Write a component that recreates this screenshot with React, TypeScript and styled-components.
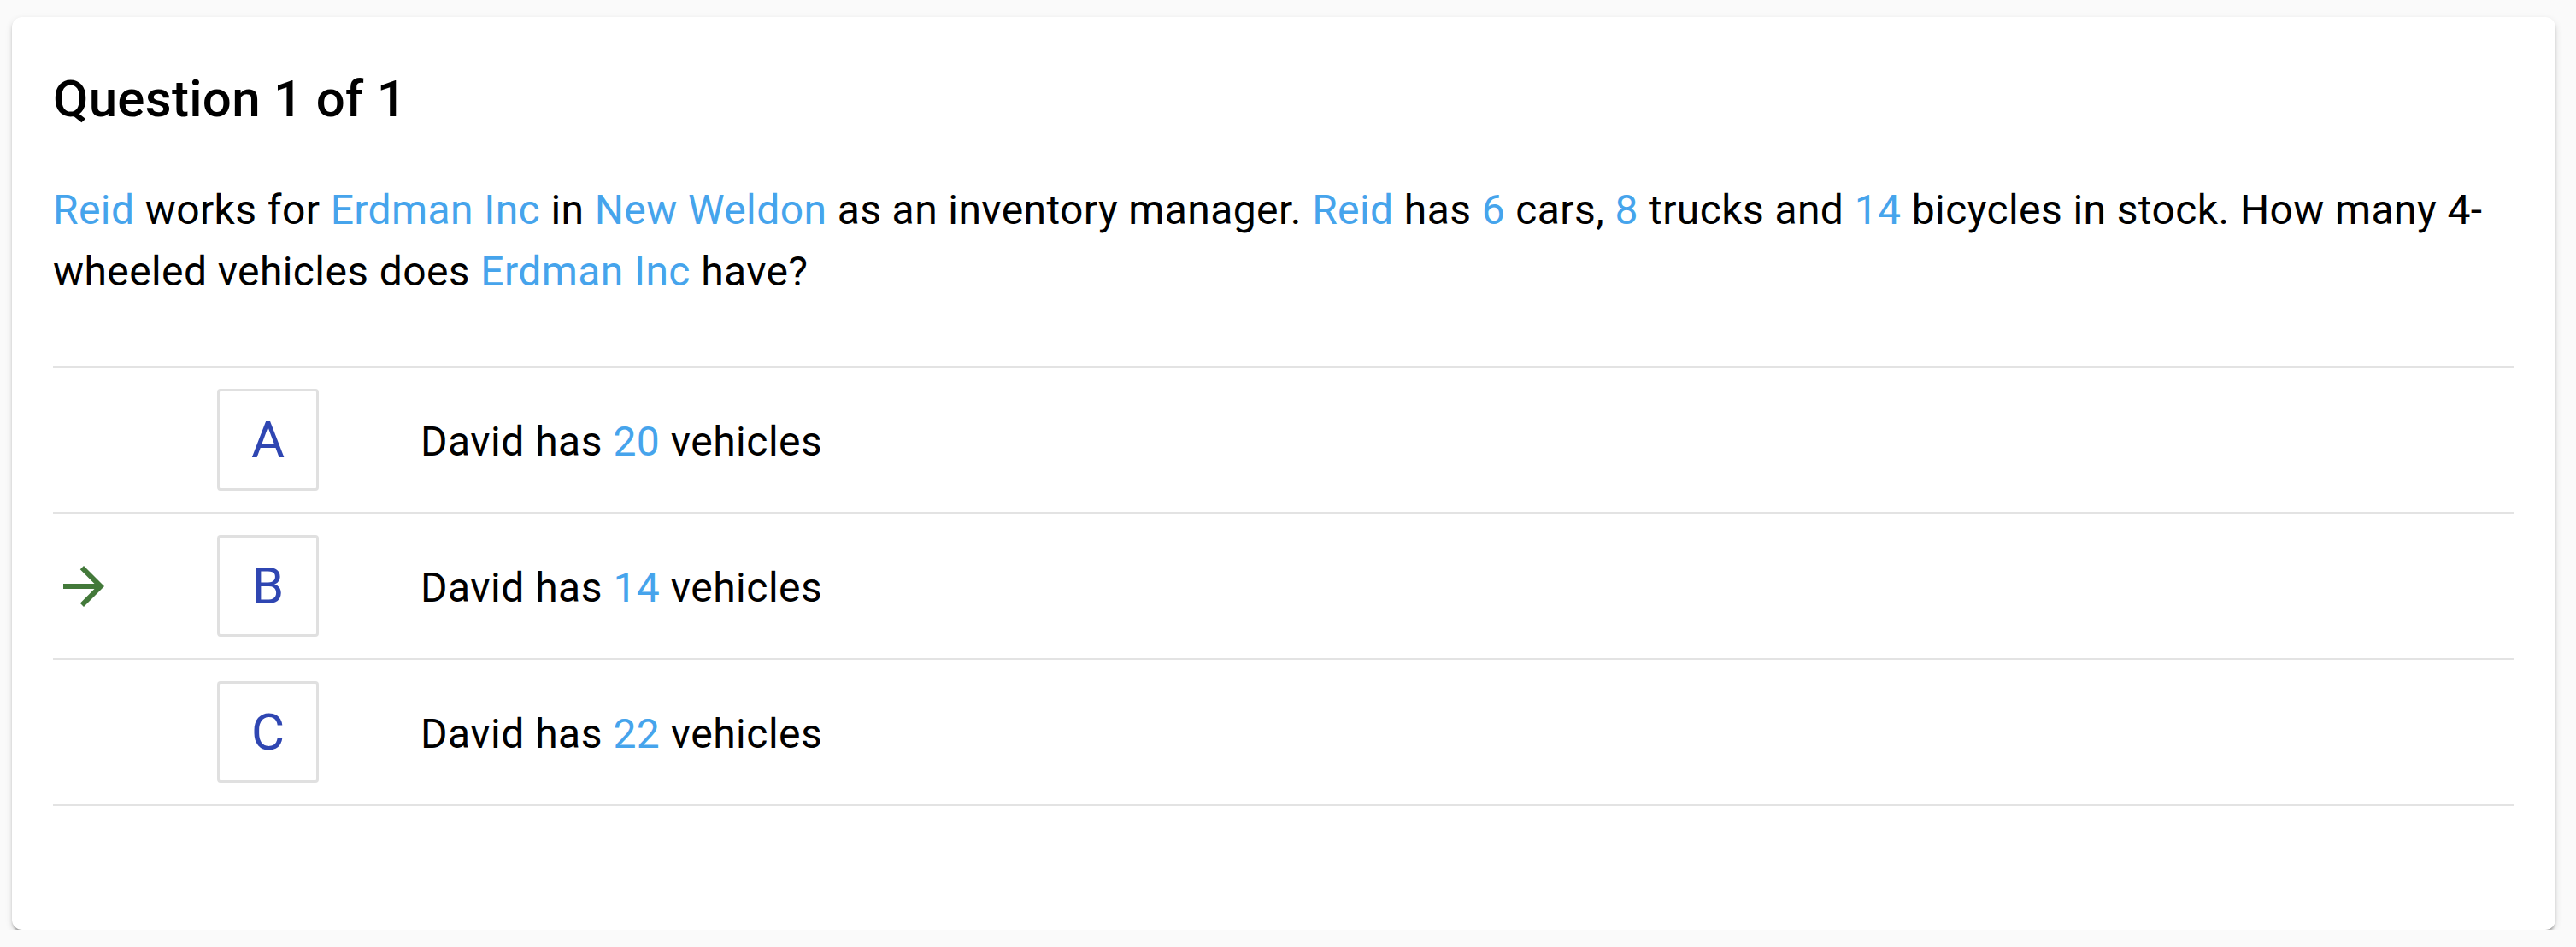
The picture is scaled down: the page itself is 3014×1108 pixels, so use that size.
import React from "react";
import styled, { createGlobalStyle } from "styled-components";

const GlobalStyle = createGlobalStyle`
  html, body {
    margin: 0;
    padding: 0;
    background: #fafafa;
  }
  body {
    font-family: Roboto, "Noto Sans", "Liberation Sans", sans-serif;
    color: #000;
  }
`;

const Page = styled.div`
  padding: 20px 24px 0 14px;
`;

const Card = styled.section`
  background: #fff;
  border-radius: 12px;
  box-shadow: 0 6px 3px -3px rgba(0, 0, 0, 0.24), 0 3px 3px 0 rgba(0, 0, 0, 0.14),
    0 3px 9px 0 rgba(0, 0, 0, 0.12);
  padding: 48px 48px 48px 48px;
`;

const Title = styled.h2`
  margin: 0 0 46px 0;
  font-size: 60px;
  line-height: 96px;
  font-weight: 500;
  letter-spacing: 0.3px;
`;

const Question = styled.p`
  margin: 0 0 74px 0;
  font-size: 48px;
  line-height: 72px;
  font-weight: 400;
  letter-spacing: 0.4px;
`;

const Hl = styled.span`
  color: #46a4ec;
`;

const List = styled.div`
  border-top: 2px solid #e3e3e3;
  margin-bottom: 97px;
`;

const Row = styled.div`
  display: grid;
  grid-template-columns: 192px 119px 1fr;
  align-items: center;
  padding: 25px 0;
  border-bottom: 2px solid #e3e3e3;
`;

const Marker = styled.div`
  width: 72px;
  height: 72px;
  display: flex;
  align-items: center;
  justify-content: center;
`;

const LetterBox = styled.div`
  box-sizing: border-box;
  width: 119px;
  height: 119px;
  border: 3px solid #e0e0e0;
  border-radius: 4px;
  display: flex;
  align-items: center;
  justify-content: center;
  font-size: 60px;
  font-weight: 400;
  color: #2f46b2;
`;

const AnswerText = styled.div`
  margin-left: 119px;
  font-size: 48px;
  line-height: 72px;
  letter-spacing: 0.5px;
  padding-top: 4px;
`;

const ArrowIcon = () => (
  <svg width="72" height="72" viewBox="0 0 24 24" aria-hidden="true">
    <path
      fill="#43793a"
      d="M12 4l-1.41 1.41L16.17 11H4v2h12.17l-5.58 5.59L12 20l8-8z"
    />
  </svg>
);

type Answer = { letter: string; count: number; selected?: boolean };

const answers: Answer[] = [
  { letter: "A", count: 20 },
  { letter: "B", count: 14, selected: true },
  { letter: "C", count: 22 },
];

export default function App() {
  return (
    <>
      <GlobalStyle />
      <Page>
        <Card>
          <Title>Question 1 of 1</Title>
          <Question>
            <Hl>Reid</Hl> works for <Hl>Erdman Inc</Hl> in <Hl>New Weldon</Hl> as an
            inventory manager. <Hl>Reid</Hl> has <Hl>6</Hl> cars, <Hl>8</Hl> trucks and{" "}
            <Hl>14</Hl> bicycles in stock. How many 4-wheeled vehicles does{" "}
            <Hl>Erdman Inc</Hl> have?
          </Question>
          <List>
            {answers.map((a) => (
              <Row key={a.letter}>
                <Marker>{a.selected ? <ArrowIcon /> : null}</Marker>
                <LetterBox>{a.letter}</LetterBox>
                <AnswerText>
                  David has <Hl>{a.count}</Hl> vehicles
                </AnswerText>
              </Row>
            ))}
          </List>
        </Card>
      </Page>
    </>
  );
}
